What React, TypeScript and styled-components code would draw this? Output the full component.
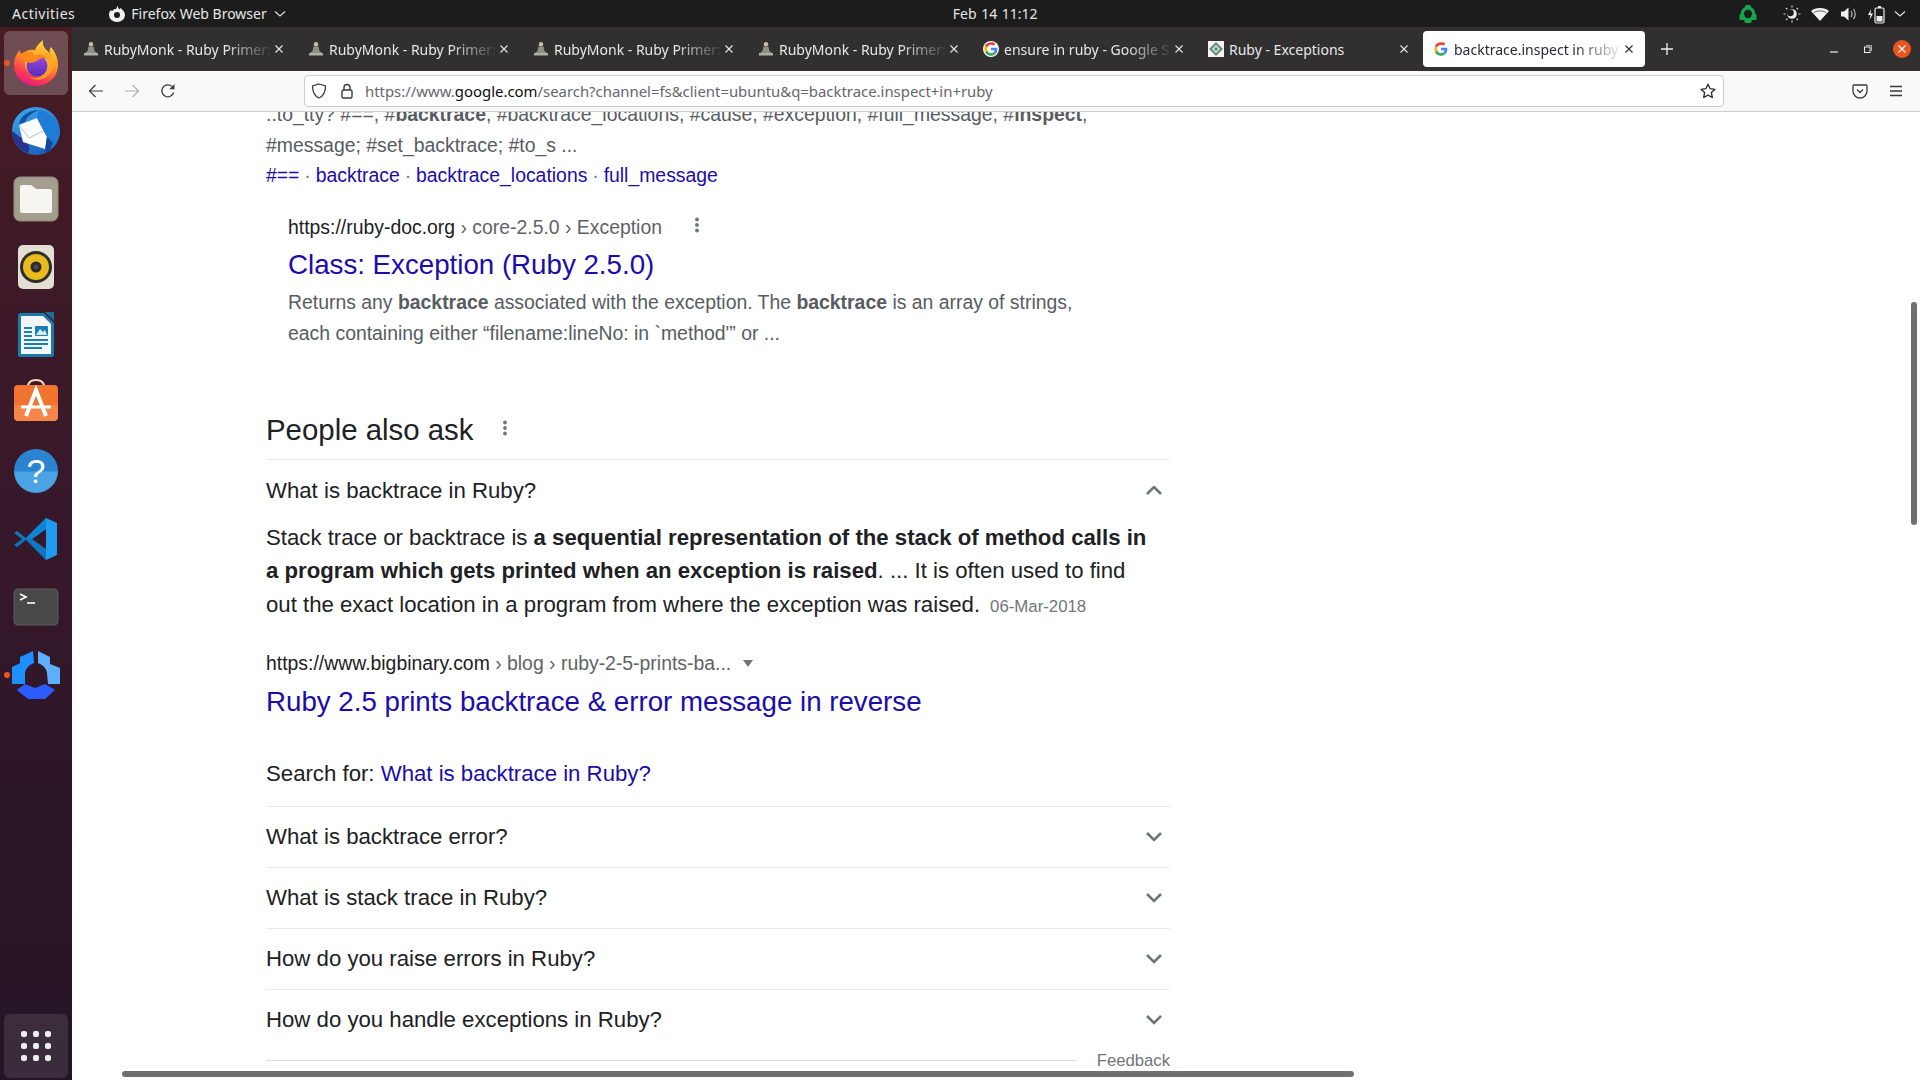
import React from 'react'
import styled, { createGlobalStyle } from 'styled-components'

const GlobalStyle = createGlobalStyle`
  html, body {
    margin: 0;
    width: 1920px;
    height: 1080px;
    overflow: hidden;
    background: #fff;
    font-family: 'Liberation Sans', Arial, sans-serif;
  }
`

const uiFont = `'Noto Sans', 'Open Sans', sans-serif`
const linkColor = '#1a0dab'
const mutedColor = '#585c61'

const Screen = styled.div`
  width: 1920px;
  height: 1080px;
  display: flex;
  flex-direction: column;
  overflow: hidden;
  position: relative;
`

/* gnome top bar */
const TopBar = styled.div`
  height: 27px;
  flex: none;
  background: #1c1c1c;
  color: #e6e6e6;
  font: 14px ${uiFont};
  display: flex;
  align-items: center;
  padding: 0 13px 0 12px;
`
const Activities = styled.span`
  letter-spacing: 0.5px;
`
const AppMenu = styled.div`
  margin-left: 34px;
  display: flex;
  align-items: center;
  gap: 6px;
`
const Clock = styled.div`
  margin-left: 666px;
  word-spacing: 1px;
`
const Tray = styled.div`
  margin-left: auto;
  display: flex;
  align-items: center;
  gap: 8px;
`
const TrayGreen = styled.span`
  display: flex;
  margin-right: 16px;
`
const TrayChevron = styled.span`
  display: flex;
  margin-left: -1px;
`

const Desktop = styled.div`
  flex: 1;
  min-height: 0;
  display: flex;
`

/* dock */
const Dock = styled.div`
  width: 72px;
  flex: none;
  background: linear-gradient(180deg, #471b23 0%, #37182a 45%, #241526 100%);
  display: flex;
  flex-direction: column;
  align-items: center;
  gap: 4px;
  padding-top: 4px;
  position: relative;
  box-sizing: border-box;
`
const DockItem = styled.div<{ $active?: boolean; $dot?: boolean }>`
  width: 64px;
  height: 64px;
  border-radius: 6px;
  display: flex;
  align-items: center;
  justify-content: center;
  position: relative;
  background: ${p => (p.$active ? 'rgba(255,255,255,0.22)' : 'transparent')};

  &::before {
    content: '';
    display: ${p => (p.$dot ? 'block' : 'none')};
    position: absolute;
    left: 0;
    top: 29px;
    width: 6px;
    height: 6px;
    border-radius: 50%;
    background: #e95420;
  }
`
const GridTile = styled.div`
  margin-top: auto;
  margin-bottom: 2px;
  width: 64px;
  height: 64px;
  border-radius: 6px;
  background: rgba(255, 255, 255, 0.1);
  display: grid;
  grid-template-columns: repeat(3, 6px);
  grid-auto-rows: 6px;
  gap: 6px;
  justify-content: center;
  align-content: center;
`
const GridDot = styled.span`
  background: #eee;
  border-radius: 2px;
`

/* browser chrome */
const Browser = styled.div`
  flex: 1;
  min-width: 0;
  display: flex;
  flex-direction: column;
`
const TabBar = styled.div`
  height: 44px;
  flex: none;
  background: #312f30;
  display: flex;
  align-items: center;
  padding-left: 1px;
  font: 14px ${uiFont};
`
const Tab = styled.div<{ $active?: boolean }>`
  width: 222px;
  height: 36px;
  margin-right: 3px;
  box-sizing: border-box;
  padding: 0 10px 0 10px;
  border-radius: 4px;
  display: flex;
  align-items: center;
  gap: 5px;
  background: ${p => (p.$active ? '#fff' : 'transparent')};
  color: ${p => (p.$active ? '#2a2a2e' : '#e8e8e8')};
`
const TabTitle = styled.span<{ $fade?: boolean }>`
  flex: 1;
  min-width: 0;
  white-space: nowrap;
  overflow: hidden;
  -webkit-mask-image: ${p =>
    p.$fade ? 'linear-gradient(90deg, #000 72%, rgba(0,0,0,0.08) 100%)' : 'none'};
`
const TabClose = styled.span`
  display: flex;
  margin-left: -3px;
`
const NewTab = styled.span`
  display: flex;
  margin-left: 13px;
`
const WindowControls = styled.div`
  margin-left: auto;
  padding-right: 1px;
  display: flex;
  align-items: center;
`
const WindowButton = styled.span`
  width: 34px;
  height: 34px;
  display: flex;
  align-items: center;
  justify-content: center;
`
const CloseCircle = styled.span`
  width: 18px;
  height: 18px;
  border-radius: 50%;
  background: #e95420;
  display: flex;
  align-items: center;
  justify-content: center;
`

const Toolbar = styled.div`
  height: 40px;
  flex: none;
  box-sizing: content-box;
  background: #f9f9fa;
  border-bottom: 1px solid #cfcfd0;
  display: flex;
  align-items: center;
  padding: 0 6px;
`
const ToolButton = styled.span`
  width: 36px;
  height: 32px;
  flex: none;
  display: flex;
  align-items: center;
  justify-content: center;
`
const UrlBar = styled.div`
  flex: 1;
  height: 32px;
  box-sizing: border-box;
  margin: 0 118px;
  background: #fff;
  border: 1px solid #cfcfd0;
  border-radius: 4px;
  display: flex;
  align-items: center;
  padding: 0 7px 0 6px;
`
const UrlIcon = styled.span`
  display: flex;
  margin-right: 12px;
`
const UrlText = styled.span`
  margin-left: -2px;
  font: 14.9px ${uiFont};
  color: #66666c;
  white-space: nowrap;
`
const UrlHost = styled.span`
  color: #0c0c0d;
`
const UrlStar = styled.span`
  display: flex;
  margin-left: auto;
`

/* page */
const Page = styled.div`
  flex: 1;
  min-height: 0;
  background: #fff;
  overflow: hidden;
  position: relative;
`
const Results = styled.div`
  width: 904px;
  margin: -13px 0 0 194px;
  color: #202124;
`
const Snippet = styled.div`
  font-size: 19.4px;
  line-height: 30.5px;
  color: ${mutedColor};
  b {
    font-weight: 700;
  }
`
const LinkLine = styled.div`
  font-size: 19.4px;
  line-height: 30.5px;
  color: #70757a;
  white-space: nowrap;
  word-spacing: -0.5px;
`
const Link = styled.a`
  color: ${linkColor};
  text-decoration: none;
`
const Nested = styled.div`
  margin: 21px 0 0 22px;
  width: 810px;
`
const UrlLine = styled.div`
  display: flex;
  align-items: center;
  font-size: 19.4px;
  line-height: 30.5px;
  color: #5f6368;
  white-space: nowrap;
`
const UrlDomain = styled.span`
  color: #202124;
`
const Kebab = styled.span<{ $gap: number; $lift: number }>`
  display: flex;
  margin: -${p => p.$lift}px 0 0 ${p => p.$gap}px;
`
const Title = styled.div`
  margin-top: 5px;
  font-size: 27.7px;
  line-height: 36px;
  color: ${linkColor};
  white-space: nowrap;
`
const AnswerTitle = styled(Title)`
  margin-top: 6px;
`
const NestedSnippet = styled(Snippet)`
  margin-top: 4px;
`
const Heading = styled.div`
  margin-top: 62px;
  padding-bottom: 10px;
  border-bottom: 1px solid #e8eaed;
  display: flex;
  align-items: center;
  font-size: 29.4px;
  line-height: 39px;
`
const Question = styled.div<{ $plain?: boolean }>`
  height: 61px;
  box-sizing: border-box;
  border-bottom: ${p => (p.$plain ? 'none' : '1px solid #e8eaed')};
  display: flex;
  align-items: center;
  justify-content: space-between;
  padding-right: 8px;
  font-size: 22.2px;
`
const Answer = styled.div`
  font-size: 22.2px;
  line-height: 33.3px;
  color: #202124;
`
const AnswerDate = styled.span`
  margin-left: 10px;
  font-size: 16.8px;
  color: #70757a;
`
const AnswerSource = styled(UrlLine)`
  margin-top: 25px;
`
const Triangle = styled.span`
  margin-left: 12px;
  width: 0;
  height: 0;
  border-left: 5.5px solid transparent;
  border-right: 5.5px solid transparent;
  border-top: 7px solid #70757a;
`
const SearchFor = styled.div`
  margin-top: 37px;
  padding-bottom: 15px;
  border-bottom: 1px solid #e8eaed;
  font-size: 22.2px;
  line-height: 33.3px;
`
const FeedbackRow = styled.div`
  margin-top: -2px;
  display: flex;
  align-items: center;
  gap: 20px;
  font-size: 16.7px;
  line-height: 24px;
  color: #70757a;
`
const FeedbackRule = styled.span`
  flex: 1;
  height: 1px;
  background: #dadce0;
`
const HScroll = styled.div`
  position: absolute;
  left: 50px;
  bottom: 3px;
  width: 1232px;
  height: 6px;
  border-radius: 3px;
  background: #6f6f6f;
`
const VScroll = styled.div`
  position: absolute;
  right: 3px;
  top: 190px;
  width: 6px;
  height: 223px;
  border-radius: 3px;
  background: #6f6f6f;
`

/* drawn icons */
const FirefoxIcon = () => (
  <svg width="48" height="48" viewBox="0 0 48 48">
    <defs>
      <linearGradient id="ffBody" x1="0.7" y1="0" x2="0.3" y2="1">
        <stop offset="0" stopColor="#ffdf3f" />
        <stop offset="0.4" stopColor="#ff9a22" />
        <stop offset="0.75" stopColor="#ff3f4f" />
        <stop offset="1" stopColor="#e31587" />
      </linearGradient>
      <linearGradient id="ffGlobe" x1="0.5" y1="0" x2="0.5" y2="1">
        <stop offset="0" stopColor="#9a4ae0" />
        <stop offset="1" stopColor="#5b2bb8" />
      </linearGradient>
    </defs>
    <path
      d="M31 1 C30 7 33 10 38 14 C37 11 38 9 39 8 C44 14 46 20 46 26 C46 38 36 47 24 47 C12 47 2 38 2 26 C2 19 5 14 8 11 C8 14 9 15 10 16 C13 11 18 10 23 11 C24 8 27 4 31 1 Z"
      fill="url(#ffBody)"
    />
    <circle cx="25" cy="25" r="12" fill="#ffb52e" />
    <circle cx="25" cy="27" r="10.5" fill="url(#ffGlobe)" />
    <path
      d="M6 17 C12 11 20 12 24 17 C29 14 34 16 37 21 C33 18 29 19 26 21 C22 24 17 25 13 22 C11 21 8 19 6 17 Z"
      fill="#ff8a1c"
    />
    <path
      d="M38 14 C43 20 43 30 37 36 C31 42 23 42 16 38 C24 41 32 37 35.5 31 C38 26 37 19 31 13 Z"
      fill="#ffa426"
      opacity="0.9"
    />
  </svg>
)

const ThunderbirdIcon = () => (
  <svg width="48" height="48" viewBox="0 0 48 48">
    <defs>
      <linearGradient id="tbBlue" x1="0.2" y1="0" x2="0.8" y2="1">
        <stop offset="0" stopColor="#3aa4ec" />
        <stop offset="1" stopColor="#1a5ab4" />
      </linearGradient>
    </defs>
    <circle cx="24" cy="24" r="24" fill="url(#tbBlue)" />
    <path d="M0 24 C0 32 5 42 16 46 C20 40 14 34 8 30 C5 28 3 26 0 24 Z" fill="#25348f" />
    <path d="M7 18 L25 11 L35 30 L33 42 L11 35 Z" fill="#fff" />
    <path d="M7 18 L17 31 L35 22" fill="none" stroke="#aeb5c4" strokeWidth="0.9" />
    <path d="M7 17 C9 8 18 3 27 3 C20 6 15 9 13 15 Z" fill="#14509e" />
    <path d="M27 3 C38 5 46 14 48 24 C47 34 42 41 33 46 L35 30 L25 11 Z" fill="#1f7cd6" />
    <path d="M35 30 L41 36 L38 43 L33 46 Z" fill="#16459a" />
  </svg>
)

const FilesIcon = () => (
  <svg width="48" height="48" viewBox="0 0 48 48">
    <rect x="2" y="2" width="44" height="44" rx="6" fill="#a49e8e" stroke="#8f8a7b" />
    <path
      d="M8 12 C8 11 9 10 10 10 L19 10 L24 14 L38 14 C39 14 40 15 40 16 L40 36 C40 37 39 38 38 38 L10 38 C9 38 8 37 8 36 Z"
      fill="#f6f5f2"
    />
  </svg>
)

const RhythmboxIcon = () => (
  <svg width="48" height="48" viewBox="0 0 48 48">
    <rect x="6" y="2" width="36" height="44" rx="5" fill="#e3dfd4" />
    <circle cx="24" cy="24" r="16" fill="#2d2d2d" />
    <circle cx="24" cy="24" r="13" fill="#e9bb1c" />
    <circle cx="24" cy="24" r="5.5" fill="#2a2a2a" />
    <circle cx="24" cy="24" r="2.5" fill="#4a4a4a" />
  </svg>
)

const WriterIcon = () => (
  <svg width="48" height="48" viewBox="0 0 48 48">
    <path d="M8 2 L32 2 L42 12 L42 44 C42 45 41 46 40 46 L8 46 C7 46 6 45 6 44 L6 4 C6 3 7 2 8 2 Z" fill="#1a7aa8" />
    <path d="M9 5 L31 5 L39 13 L39 43 L9 43 Z" fill="#f3f6f8" />
    <path d="M33 1 L42 1 L42 10 Z" fill="#1a6f99" />
    <path d="M12 17 L20 17 M12 21 L20 21 M12 25 L20 25 M12 29 L36 29 M12 33 L36 33 M12 37 L30 37" stroke="#1a7fb5" strokeWidth="1.8" />
    <rect x="23" y="15" width="13" height="10" rx="1" fill="#1a7fb5" />
    <path d="M24 24 L28 18 L31 21 L33 19 L35 24 Z" fill="#d8e9f2" />
  </svg>
)

const SoftwareIcon = () => (
  <svg width="48" height="48" viewBox="0 0 48 48">
    <path d="M16 8 C16 2 20 1 24 1 C28 1 32 2 32 8" fill="none" stroke="#f0d8bc" strokeWidth="2" />
    <rect x="2" y="6" width="44" height="36" rx="4" fill="#f0742f" />
    <path d="M2 26 L46 26 L46 38 C46 40 44 42 42 42 L6 42 C4 42 2 40 2 38 Z" fill="#f5854a" />
    <path d="M14 37 L24 11 L34 37" fill="none" stroke="#fff" strokeWidth="4" />
    <path d="M9 28 L39 28" stroke="#fff" strokeWidth="3" />
  </svg>
)

const HelpCircle = styled.span`
  width: 44px;
  height: 44px;
  border-radius: 50%;
  background: linear-gradient(180deg, #2a84d2 0%, #2a84d2 50%, #4aa3e2 52%, #4aa3e2 100%);
  color: #fff;
  font: 34px/44px 'Liberation Sans', sans-serif;
  text-align: center;
`

const VscodeIcon = () => (
  <svg width="48" height="48" viewBox="0 0 48 48">
    <path d="M34 3 L45 8 L45 40 L34 45 Z" fill="#1f9cf0" />
    <path d="M34 3 L14 23 L5 16 L2 18 L10 24 L2 30 L5 32 L14 25 L34 45 L34 34 L20 24 L34 14 Z" fill="#0f77bd" />
    <path d="M34 3 L34 14 L20 24 L14 23 Z" fill="#0a86d4" />
  </svg>
)

const TerminalIcon = () => (
  <svg width="48" height="48" viewBox="0 0 48 48">
    <rect x="2" y="6" width="44" height="36" rx="4" fill="#484848" stroke="#5c5c5c" />
    <path d="M8 11 L14 14 L8 17" fill="none" stroke="#fff" strokeWidth="1.6" />
    <path d="M15 20 L23 20" stroke="#fff" strokeWidth="1.6" />
  </svg>
)

const BlueClusterIcon = () => (
  <svg width="48" height="48" viewBox="0 0 48 48">
    <path d="M0 16 L8 12.3 L8 6 L21 0 L22 12 Q14 15 13 22 L13 33 L0 33 Z" fill="#1f8fff" />
    <path d="M48 17 L38 13 L38 6 L26 0 L26 12 Q34 15 35 22 L36 33 L48 33 Z" fill="#5eb0ff" />
    <path d="M4.7 39 L13 33 L23 37 L33 33 L43 39 L33 48 L16 48 Z" fill="#2a5cff" />
  </svg>
)

const MonkIcon = () => (
  <svg width="16" height="16" viewBox="0 0 16 16">
    <circle cx="8" cy="3.2" r="2.2" fill="#c9bda8" />
    <path d="M5.5 5.6 L10.5 5.6 L11.5 10 L14.5 12.5 L1.5 12.5 L4.5 10 Z" fill="#8d9088" />
    <path d="M1 12 L15 12 L15 14.5 L1 14.5 Z" fill="#aeb0a8" />
  </svg>
)

const GoogleIcon = () => (
  <svg width="16" height="16" viewBox="0 0 48 48">
    <circle cx="24" cy="24" r="24" fill="#fff" />
    <path d="M43 24.5 C43 23 42.9 22 42.6 20.5 L24 20.5 L24 28 L34.8 28 C34.3 30.8 32.8 33 30.5 34.5 L37 39.5 C41 36 43 31 43 24.5 Z" fill="#4285f4" />
    <path d="M24 44 C29.4 44 33.9 42.2 37 39.5 L30.5 34.5 C28.7 35.7 26.5 36.4 24 36.4 C18.8 36.4 14.4 32.9 12.8 28.2 L6.1 33.4 C9.4 39.8 16.1 44 24 44 Z" fill="#34a853" />
    <path d="M12.8 28.2 C12.4 27 12.2 25.5 12.2 24 C12.2 22.5 12.4 21 12.8 19.8 L6.1 14.6 C4.8 17.3 4 20.5 4 24 C4 27.5 4.8 30.7 6.1 33.4 Z" fill="#fbbc05" />
    <path d="M24 11.6 C26.9 11.6 29.2 12.6 31 14.3 L37 8.4 C33.9 5.5 29.4 4 24 4 C16.1 4 9.4 8.2 6.1 14.6 L12.8 19.8 C14.4 15.1 18.8 11.6 24 11.6 Z" fill="#ea4335" />
  </svg>
)

const RubyFavicon = () => (
  <svg width="16" height="16" viewBox="0 0 16 16">
    <rect width="16" height="16" fill="#f4f4f4" />
    <path d="M8 1 L15 8 L8 15 L1 8 Z" fill="#6c8a7c" />
    <path d="M8 4 L12 8 L8 12 L4 8 Z" fill="#dfe8e2" />
    <circle cx="8" cy="8" r="1.8" fill="#3f9a62" />
  </svg>
)

const CrossIcon = ({ color = '#e8e8e8' }: { color?: string }) => (
  <svg width="12" height="12" viewBox="0 0 12 12">
    <path d="M2.5 2.5 L9.5 9.5 M9.5 2.5 L2.5 9.5" stroke={color} strokeWidth="1.1" fill="none" />
  </svg>
)

const RingIcon = () => (
  <svg width="20" height="20" viewBox="0 0 20 20" fill="#12a84e">
    <circle cx="10" cy="10" r="5.8" fill="none" stroke="#12a84e" strokeWidth="3.2" />
    <rect x="7" y="1" width="6" height="4" rx="1.5" />
    <rect x="1.5" y="10" width="5" height="6" rx="1.5" />
    <rect x="13.5" y="10" width="5" height="6" rx="1.5" />
    <rect x="6.5" y="15.5" width="7" height="3.5" rx="1.5" />
  </svg>
)

const NightLightIcon = () => (
  <svg width="20" height="20" viewBox="0 0 20 20" fill="none">
    <circle cx="10" cy="10" r="4.8" fill="#e8e8e8" />
    <circle cx="8.4" cy="8.8" r="3.4" fill="#1c1c1c" />
    <path d="M10 1.5 V3.5 M10 16.5 V18.5 M1.5 10 H3.5 M16.5 10 H18.5 M4 4 L5.4 5.4 M14.6 14.6 L16 16 M4 16 L5.4 14.6 M14.6 5.4 L16 4" stroke="#d8d8d8" strokeWidth="1.2" />
  </svg>
)

const WifiIcon = () => (
  <svg width="20" height="20" viewBox="0 0 20 20">
    <path d="M1 7 C5 3 15 3 19 7 L10 17 Z" fill="#f2f2f2" />
    <path d="M4 8.5 C7 6.4 13 6.4 16 8.5" stroke="#1c1c1c" strokeWidth="0.7" fill="none" />
  </svg>
)

const VolumeIcon = () => (
  <svg width="20" height="20" viewBox="0 0 20 20" fill="none">
    <path d="M3 7.5 L6 7.5 L10.5 3.5 L10.5 16.5 L6 12.5 L3 12.5 Z" fill="#f0f0f0" />
    <path d="M13 7 C14.2 8.5 14.2 11.5 13 13 M15.5 5 C17.5 8 17.5 12 15.5 15" stroke="#bbb" strokeWidth="1.2" />
  </svg>
)

const BatteryIcon = () => (
  <svg width="20" height="20" viewBox="0 0 20 20" fill="none">
    <rect x="9" y="4" width="9" height="15" rx="1.5" stroke="#eee" strokeWidth="1.2" />
    <rect x="12" y="2" width="3" height="2" fill="#eee" />
    <rect x="10.5" y="12" width="6" height="5.5" fill="#eee" />
    <path d="M5 5 L2 11 L4.5 11 L3.5 16 L7 9.5 L4.5 9.5 Z" fill="#f4f4f4" />
  </svg>
)

const SmallChevron = () => (
  <svg width="14" height="10" viewBox="0 0 14 10" fill="none">
    <path d="M2 2.5 L7 7 L12 2.5" stroke="#ddd" strokeWidth="1.2" />
  </svg>
)

const AppFlameIcon = () => (
  <svg width="16" height="16" viewBox="0 0 16 16">
    <path d="M9 0 C8.5 1.5 9.5 2.5 11 3.5 C10.8 2.8 11 2.4 11.3 2.1 C14 4 16 6.4 16 9 A8 7 0 0 1 0 9 C0 6.5 1 4.8 2.2 3.7 C2.2 4.6 2.6 5 3 5.3 C4.2 3.4 6 2.9 7.2 3 C7.6 1.7 8 0.8 9 0 Z M5 9 A3 3 0 0 0 11 9 A3 3 0 0 0 5 9 Z" fill="#f0f0f0" fillRule="evenodd" />
  </svg>
)

const ArrowIcon = ({ dir, color }: { dir: 'left' | 'right'; color: string }) => (
  <svg width="16" height="16" viewBox="0 0 16 16" fill="none">
    <path
      d={dir === 'left' ? 'M15 8 H1.5 M7.5 2 L1.5 8 L7.5 14' : 'M1 8 H14.5 M8.5 2 L14.5 8 L8.5 14'}
      stroke={color}
      strokeWidth="1.2"
    />
  </svg>
)

const ReloadIcon = () => (
  <svg width="16" height="16" viewBox="0 0 16 16" fill="none">
    <path d="M13.6 9.5 A6 6 0 1 1 11.8 3.3" stroke="#3a3a3f" strokeWidth="1.3" />
    <path d="M14.5 1 V6.2 H9.3 Z" fill="#3a3a3f" />
  </svg>
)

const ShieldIcon = () => (
  <svg width="16" height="16" viewBox="0 0 16 16" fill="none">
    <path d="M8 1 L14.5 3 C14.5 9 12.5 13 8 15 C3.5 13 1.5 9 1.5 3 Z" stroke="#3a3a3f" strokeWidth="1.3" />
  </svg>
)

const LockIcon = () => (
  <svg width="16" height="16" viewBox="0 0 16 16" fill="none">
    <path d="M5 7 V4.5 A3 3 0 0 1 11 4.5 V7" stroke="#3a3a3f" strokeWidth="1.4" />
    <rect x="3" y="7" width="10" height="8" rx="1.5" stroke="#3a3a3f" strokeWidth="1.4" />
  </svg>
)

const StarIcon = () => (
  <svg width="16" height="16" viewBox="0 0 16 16" fill="none">
    <path d="M8 1.2 L10.1 5.7 L15 6.3 L11.4 9.6 L12.3 14.5 L8 12.1 L3.7 14.5 L4.6 9.6 L1 6.3 L5.9 5.7 Z" stroke="#2a2a2e" strokeWidth="1.3" strokeLinejoin="round" />
  </svg>
)

const PocketIcon = () => (
  <svg width="16" height="16" viewBox="0 0 16 16" fill="none">
    <path d="M2 2 H14 C14.6 2 15 2.4 15 3 V8 A7 7 0 0 1 1 8 V3 C1 2.4 1.4 2 2 2 Z" stroke="#3a3a3f" strokeWidth="1.3" />
    <path d="M5 6.5 L8 9.5 L11 6.5" stroke="#3a3a3f" strokeWidth="1.3" />
  </svg>
)

const MenuIcon = () => (
  <svg width="16" height="16" viewBox="0 0 16 16" fill="none">
    <path d="M2 3.5 H14 M2 8 H14 M2 12.5 H14" stroke="#3a3a3f" strokeWidth="1.3" />
  </svg>
)

const KebabIcon = () => (
  <svg width="4" height="16" viewBox="0 0 4 16">
    <circle cx="2" cy="2.5" r="1.9" fill="#70757a" />
    <circle cx="2" cy="8" r="1.9" fill="#70757a" />
    <circle cx="2" cy="13.5" r="1.9" fill="#70757a" />
  </svg>
)

const Chevron = ({ up }: { up?: boolean }) => (
  <svg width="16" height="10" viewBox="0 0 16 10" fill="none">
    <path d={up ? 'M1 8 L8 1 L15 8' : 'M1 1 L8 8 L15 1'} stroke="#70757a" strokeWidth="2.6" />
  </svg>
)

const tabs = [
  { title: 'RubyMonk - Ruby Primer:', icon: <MonkIcon />, fade: true },
  { title: 'RubyMonk - Ruby Primer:', icon: <MonkIcon />, fade: true },
  { title: 'RubyMonk - Ruby Primer:', icon: <MonkIcon />, fade: true },
  { title: 'RubyMonk - Ruby Primer:', icon: <MonkIcon />, fade: true },
  { title: 'ensure in ruby - Google S', icon: <GoogleIcon />, fade: true },
  { title: 'Ruby - Exceptions', icon: <RubyFavicon />, fade: false },
  { title: 'backtrace.inspect in ruby', icon: <GoogleIcon />, fade: true, active: true },
]

const questions = [
  'What is backtrace error?',
  'What is stack trace in Ruby?',
  'How do you raise errors in Ruby?',
  'How do you handle exceptions in Ruby?',
]

export default function App() {
  return (
    <Screen>
      <GlobalStyle />
      <TopBar>
        <Activities>Activities</Activities>
        <AppMenu>
          <AppFlameIcon />
          <span>Firefox Web Browser</span>
          <SmallChevron />
        </AppMenu>
        <Clock>Feb 14 11:12</Clock>
        <Tray>
          <TrayGreen>
            <RingIcon />
          </TrayGreen>
          <NightLightIcon />
          <WifiIcon />
          <VolumeIcon />
          <BatteryIcon />
          <TrayChevron>
            <SmallChevron />
          </TrayChevron>
        </Tray>
      </TopBar>

      <Desktop>
        <Dock>
          <DockItem $active $dot>
            <FirefoxIcon />
          </DockItem>
          <DockItem>
            <ThunderbirdIcon />
          </DockItem>
          <DockItem>
            <FilesIcon />
          </DockItem>
          <DockItem>
            <RhythmboxIcon />
          </DockItem>
          <DockItem>
            <WriterIcon />
          </DockItem>
          <DockItem>
            <SoftwareIcon />
          </DockItem>
          <DockItem>
            <HelpCircle>?</HelpCircle>
          </DockItem>
          <DockItem>
            <VscodeIcon />
          </DockItem>
          <DockItem>
            <TerminalIcon />
          </DockItem>
          <DockItem $dot>
            <BlueClusterIcon />
          </DockItem>
          <GridTile>
            {Array.from({ length: 9 }, (_, i) => (
              <GridDot key={i} />
            ))}
          </GridTile>
        </Dock>

        <Browser>
          <TabBar>
            {tabs.map((tab, i) => (
              <Tab key={i} $active={tab.active}>
                {tab.icon}
                <TabTitle $fade={tab.fade}>{tab.title}</TabTitle>
                <TabClose>
                  <CrossIcon color={tab.active ? '#2a2a2e' : '#e8e8e8'} />
                </TabClose>
              </Tab>
            ))}
            <NewTab>
              <svg width="12" height="12" viewBox="0 0 12 12">
                <path d="M6 0 V12 M0 6 H12" stroke="#eee" strokeWidth="1.3" />
              </svg>
            </NewTab>
            <WindowControls>
              <WindowButton>
                <svg width="8" height="8" viewBox="0 0 8 8">
                  <path d="M0 7 H8" stroke="#eee" strokeWidth="1.2" />
                </svg>
              </WindowButton>
              <WindowButton>
                <svg width="8" height="8" viewBox="0 0 8 8" fill="none">
                  <rect x="0.5" y="2" width="5.5" height="5.5" stroke="#eee" />
                  <path d="M2 0.5 H7.5 V6" stroke="#aaa" />
                </svg>
              </WindowButton>
              <WindowButton>
                <CloseCircle>
                  <CrossIcon color="#fff" />
                </CloseCircle>
              </WindowButton>
            </WindowControls>
          </TabBar>

          <Toolbar>
            <ToolButton>
              <ArrowIcon dir="left" color="#3a3a3f" />
            </ToolButton>
            <ToolButton>
              <ArrowIcon dir="right" color="#b1b1b3" />
            </ToolButton>
            <ToolButton>
              <ReloadIcon />
            </ToolButton>
            <UrlBar>
              <UrlIcon>
                <ShieldIcon />
              </UrlIcon>
              <UrlIcon>
                <LockIcon />
              </UrlIcon>
              <UrlText>
                https://www.<UrlHost>google.com</UrlHost>
                /search?channel=fs&client=ubuntu&q=backtrace.inspect+in+ruby
              </UrlText>
              <UrlStar>
                <StarIcon />
              </UrlStar>
            </UrlBar>
            <ToolButton>
              <PocketIcon />
            </ToolButton>
            <ToolButton>
              <MenuIcon />
            </ToolButton>
          </Toolbar>

          <Page>
            <Results>
              <Snippet>
                ..to_tty? #==, #<b>backtrace</b>, #backtrace_locations, #cause, #exception,
                #full_message, #<b>inspect</b>,
                <br />
                #message; #set_backtrace; #to_s ...
              </Snippet>
              <LinkLine>
                <Link>#==</Link> · <Link>backtrace</Link> · <Link>backtrace_locations</Link> ·{' '}
                <Link>full_message</Link>
              </LinkLine>

              <Nested>
                <UrlLine>
                  <UrlDomain>https://ruby-doc.org</UrlDomain>&nbsp;› core-2.5.0 › Exception
                  <Kebab $gap={33} $lift={3}>
                    <KebabIcon />
                  </Kebab>
                </UrlLine>
                <Title>Class: Exception (Ruby 2.5.0)</Title>
                <NestedSnippet>
                  Returns any <b>backtrace</b> associated with the exception. The <b>backtrace</b>{' '}
                  is an array of strings,
                  <br />
                  each containing either “filename:lineNo: in `method'” or ...
                </NestedSnippet>
              </Nested>

              <Heading>
                People also ask
                <Kebab $gap={29} $lift={4}>
                  <KebabIcon />
                </Kebab>
              </Heading>

              <Question $plain>
                What is backtrace in Ruby?
                <Chevron up />
              </Question>
              <Answer>
                Stack trace or backtrace is{' '}
                <b>a sequential representation of the stack of method calls in</b>
                <br />
                <b>a program which gets printed when an exception is raised</b>. ... It is often
                used to find
                <br />
                out the exact location in a program from where the exception was raised.
                <AnswerDate>06-Mar-2018</AnswerDate>
              </Answer>
              <AnswerSource>
                <UrlDomain>https://www.bigbinary.com</UrlDomain>&nbsp;› blog › ruby-2-5-prints-ba...
                <Triangle />
              </AnswerSource>
              <AnswerTitle>Ruby 2.5 prints backtrace &amp; error message in reverse</AnswerTitle>
              <SearchFor>
                Search for: <Link>What is backtrace in Ruby?</Link>
              </SearchFor>

              {questions.map((q, i) => (
                <Question key={q} $plain={i === questions.length - 1}>
                  {q}
                  <Chevron />
                </Question>
              ))}
              <FeedbackRow>
                <FeedbackRule />
                Feedback
              </FeedbackRow>
            </Results>
            <HScroll />
            <VScroll />
          </Page>
        </Browser>
      </Desktop>
    </Screen>
  )
}
